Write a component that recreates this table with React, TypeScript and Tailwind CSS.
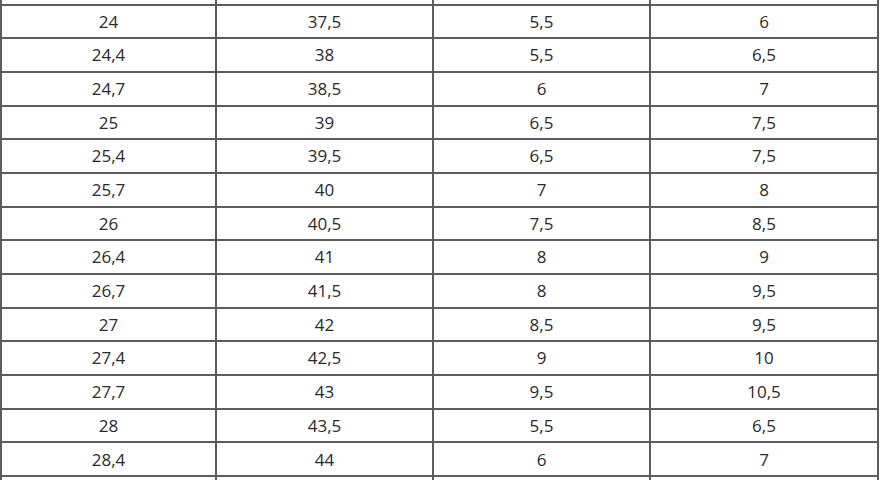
const rows: string[][] = [
  ["24", "37,5", "5,5", "6"],
  ["24,4", "38", "5,5", "6,5"],
  ["24,7", "38,5", "6", "7"],
  ["25", "39", "6,5", "7,5"],
  ["25,4", "39,5", "6,5", "7,5"],
  ["25,7", "40", "7", "8"],
  ["26", "40,5", "7,5", "8,5"],
  ["26,4", "41", "8", "9"],
  ["26,7", "41,5", "8", "9,5"],
  ["27", "42", "8,5", "9,5"],
  ["27,4", "42,5", "9", "10"],
  ["27,7", "43", "9,5", "10,5"],
  ["28", "43,5", "5,5", "6,5"],
  ["28,4", "44", "6", "7"],
  ["", "", "", ""],
];

export default function App() {
  return (
    <div className="h-[480px] w-[880px] overflow-hidden bg-white font-['Open_Sans',sans-serif] text-[17px] text-[#2a2a2a]">
      {/* partial row cut off at the top */}
      <div className="grid h-[5.5px] w-[879px] grid-cols-[215px_217px_217px_228px] border-b-2 border-l-2 border-[#5c5c5c]">
        {[0, 1, 2, 3].map((i) => (
          <div key={i} className="border-r-2 border-[#5c5c5c]" />
        ))}
      </div>
      {rows.map((row, r) => (
        <div
          key={r}
          className="grid h-[33.7px] w-[879px] grid-cols-[215px_217px_217px_228px] border-b-2 border-l-2 border-[#5c5c5c]"
        >
          {row.map((cell, c) => (
            <div key={c} className="flex items-center justify-center border-r-2 border-[#5c5c5c]">
              {cell}
            </div>
          ))}
        </div>
      ))}
    </div>
  );
}
